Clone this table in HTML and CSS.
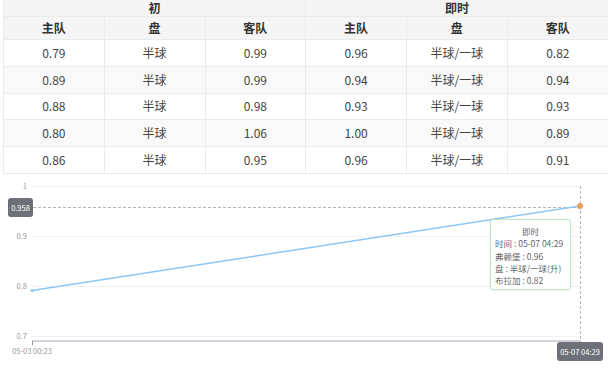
FILE: index.html
```html
<!DOCTYPE html>
<html lang="zh">
<head>
<meta charset="utf-8">
<link rel="stylesheet" href="styles.css">
</head>
<body>
<div class="page">
  <table class="odds">
    <thead>
      <tr class="group-row">
        <th colspan="3">初</th>
        <th colspan="3">即时</th>
      </tr>
      <tr class="col-row">
        <th>主队</th><th>盘</th><th>客队</th>
        <th>主队</th><th>盘</th><th>客队</th>
      </tr>
    </thead>
    <tbody>
      <tr><td>0.79</td><td>半球</td><td>0.99</td><td>0.96</td><td>半球/一球</td><td>0.82</td></tr>
      <tr class="alt"><td>0.89</td><td>半球</td><td>0.99</td><td>0.94</td><td>半球/一球</td><td>0.94</td></tr>
      <tr><td>0.88</td><td>半球</td><td>0.98</td><td>0.93</td><td>半球/一球</td><td>0.93</td></tr>
      <tr class="alt"><td>0.80</td><td>半球</td><td>1.06</td><td>1.00</td><td>半球/一球</td><td>0.89</td></tr>
      <tr><td>0.86</td><td>半球</td><td>0.95</td><td>0.96</td><td>半球/一球</td><td>0.91</td></tr>
    </tbody>
  </table>

  <div class="chart">
    <svg class="chart-svg" width="608" height="210" viewBox="0 174 608 210">
      <g class="grid">
        <line x1="32" y1="186.5" x2="580" y2="186.5"/>
        <line x1="32" y1="236.5" x2="580" y2="236.5"/>
        <line x1="32" y1="286.5" x2="580" y2="286.5"/>
        <line x1="32" y1="336.5" x2="580" y2="336.5"/>
      </g>
      <g class="ylabels">
        <text x="27" y="188.5">1</text>
        <text x="27" y="238.5">0.9</text>
        <text x="27" y="288.5">0.8</text>
        <text x="27" y="338.5">0.7</text>
      </g>
      <line class="axis" x1="32" y1="341" x2="580" y2="341"/>
      <line class="tick" x1="32.5" y1="341" x2="32.5" y2="345"/>
      <text class="xlabel" x="32" y="354">05-03 00:23</text>
      <line class="cross" x1="33" y1="207.5" x2="580" y2="207.5"/>
      <line class="cross" x1="580.5" y1="186" x2="580.5" y2="342"/>
      <line class="series" x1="32" y1="290.5" x2="580" y2="206"/>
      <circle class="start-dot" cx="32" cy="290.5" r="1.5"/>
      <circle class="end-dot" cx="580" cy="206" r="3"/>
    </svg>
    <div class="tag tag-y">0.958</div>
    <div class="tag tag-x">05-07 04:29</div>
    <div class="tooltip">
      <div class="tip-title">即时</div>
      <div>时间 : 05-07 04:29</div>
      <div>弗赖堡 : 0.96</div>
      <div>盘 : 半球/一球(升)</div>
      <div>布拉加 : 0.82</div>
    </div>
  </div>
</div>
</body>
</html>
```
FILE: styles.css
```css
html, body {
  margin: 0;
  padding: 0;
  background: #ffffff;
}
body {
  font-family: "Noto Sans CJK SC", "Microsoft YaHei", "Liberation Sans", sans-serif;
  color: #333333;
  width: 608px;
  height: 384px;
  overflow: hidden;
}
.page {
  width: 608px;
}
.odds {
  margin-left: 3px;
  width: 605px;
  border-collapse: collapse;
  table-layout: fixed;
  font-size: 12px;
}
.odds th,
.odds td {
  border: 1px solid #ebebeb;
  text-align: center;
  padding: 0;
  line-height: 14px;
}
.odds tr:first-child th {
  border-top: none;
}
.odds tr > :last-child {
  border-right: none;
}
.odds th {
  background: #f5f5f5;
  font-weight: bold;
  color: #333333;
}
.group-row th {
  height: 16px;
}
.col-row th {
  height: 22px;
}
.odds td {
  height: 25.8px;
  color: #444444;
}
.odds tr.alt td {
  background: #f9f9f9;
}
.chart {
  position: relative;
  width: 608px;
  height: 210px;
}
.chart-svg {
  display: block;
}
.grid line {
  stroke: #eef1f7;
  stroke-width: 1;
}
.ylabels text {
  font-size: 7.5px;
  fill: #999999;
  text-anchor: end;
  font-family: "Noto Sans CJK SC", "Liberation Sans", sans-serif;
}
.axis {
  stroke: #d2d2d8;
  stroke-width: 2;
}
.tick {
  stroke: #999999;
  stroke-width: 1;
}
.xlabel {
  font-size: 7.5px;
  fill: #999999;
  text-anchor: middle;
  font-family: "Noto Sans CJK SC", "Liberation Sans", sans-serif;
}
.cross {
  stroke: #b4b4b4;
  stroke-width: 1;
  stroke-dasharray: 3 2;
}
.series {
  stroke: #8cc6f4;
  stroke-width: 1.5;
}
.start-dot {
  fill: #8cc6f4;
}
.end-dot {
  fill: #e6a05c;
}
.tag {
  position: absolute;
  background: #6e7079;
  color: #ffffff;
  font-size: 7.5px;
  line-height: 19px;
  height: 19px;
  border-radius: 3px;
  text-align: center;
  white-space: nowrap;
}
.tag-y {
  left: 8px;
  top: 24px;
  width: 25px;
}
.tag-x {
  left: 557px;
  top: 168px;
  width: 46px;
}
.tooltip {
  position: absolute;
  left: 490px;
  top: 45px;
  width: 71px;
  padding: 5px 4px 3px 4px;
  background: #ffffff;
  border: 1px solid #bfe6c8;
  border-radius: 3px;
  box-shadow: 0 0 3px rgba(0, 0, 0, 0.08);
  font-size: 8.5px;
  line-height: 12.3px;
  color: #666666;
  white-space: nowrap;
}
.tip-title {
  text-align: center;
}
```
